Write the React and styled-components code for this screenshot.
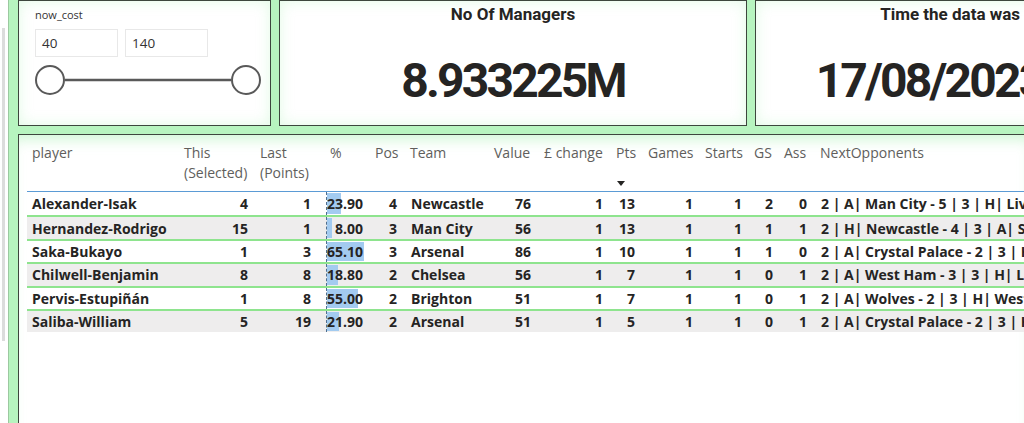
import React from 'react';
import styled, { createGlobalStyle } from 'styled-components';

const GlobalStyle = createGlobalStyle`
	html, body {
		margin: 0;
		padding: 0;
		background: #ffffff;
		overflow: hidden;
	}

	#root {
		width: 1024px;
		height: 423px;
	}
`

const green = '#b7f4bf';
const edge = '#3d463d';
const columns = '153px 76px 70px 45px 35px 84px 50px 72px 32px 57px 49px 30px 36px 420px';

const Page = styled.div`
	display: flex;
	width: 1024px;
	height: 423px;
	overflow: hidden;
`

const LeftRail = styled.div`
	width: 8px;
	flex-shrink: 0;
	padding-top: 28px;
	box-sizing: border-box;

	&::before {
		content: "";
		display: block;
		margin-left: 2px;
		width: 3px;
		height: 313px;
		background: #dcdcdc;
	}
`

const Canvas = styled.div`
	flex: 1;
	min-width: 0;
	background: ${green};
	border-left: 1px solid #9cc9a0;
	padding-left: 9px;
	display: flex;
	flex-direction: column;
`

const TopRow = styled.div`
	display: flex;
	gap: 8px;
	height: 126px;
	flex-shrink: 0;
`

const Card = styled.div`
	flex-shrink: 0;
	width: ${props => props.width}px;
	box-sizing: border-box;
	height: 126px;
	background: #ffffff;
	border: 1px solid ${edge};
	box-shadow: inset 0 0 14px rgba(170, 240, 180, 0.35);
	display: flex;
	flex-direction: column;
	overflow: hidden;
`

const SlicerCard = styled(Card)`
	padding: 6px 0 0 16px;
	font-family: "Open Sans", "Noto Sans", sans-serif;
	color: #333333;
`

const SlicerLabel = styled.div`
	font-size: 11px;
	line-height: 15px;
`

const RangeInputs = styled.div`
	display: flex;
	gap: 7px;
	margin-top: 7px;
`

const RangeBox = styled.div`
	width: 83px;
	height: 28px;
	box-sizing: border-box;
	border: 1px solid #e8e8e8;
	padding-left: 6px;
	display: flex;
	align-items: center;
	font-size: 13.5px;
`

const SliderTrack = styled.svg`
	display: block;
	margin-top: 7px;
	margin-left: -1px;
`

const KpiTitle = styled.div`
	font-family: Roboto, "DejaVu Sans", sans-serif;
	font-weight: 700;
	font-size: 17px;
	line-height: 22px;
	text-align: center;
	color: #252423;
	margin-top: 2px;
	white-space: nowrap;
`

const KpiValue = styled.div`
	flex: 1;
	display: flex;
	align-items: center;
	justify-content: center;
	padding-top: 10px;
	font-family: Roboto, "DejaVu Sans", sans-serif;
	font-weight: 700;
	font-size: 48px;
	letter-spacing: -2.8px;
	color: #252423;
	white-space: nowrap;
`

const TableCard = styled.div`
	flex: 1;
	margin-top: 8px;
	background: #ffffff;
	border-top: 1px solid ${edge};
	border-left: 1px solid ${edge};
	box-shadow: inset 0 12px 14px -8px rgba(170, 240, 180, 0.6);
	padding: 0 0 0 8px;
	font-family: "Open Sans", "Noto Sans", sans-serif;
	font-size: 14px;
	overflow: hidden;
`

const HeaderRow = styled.div`
	display: grid;
	grid-template-columns: ${columns};
	height: 57px;
	border-bottom: 1px solid #5b9bd5;
	box-sizing: border-box;
	color: #605e5c;
`

const HeaderCell = styled.div`
	position: relative;
	padding: 8px 0 0 ${props => props.first ? 5 : 4}px;
	line-height: 20px;
	white-space: nowrap;
`

const SortArrow = styled.span`
	position: absolute;
	left: 5px;
	top: 46px;
	width: 0;
	height: 0;
	border-left: 4px solid transparent;
	border-right: 4px solid transparent;
	border-top: 5px solid #252423;
`

const Row = styled.div`
	display: grid;
	grid-template-columns: ${columns};
	height: 23.4px;
	box-sizing: border-box;
	background: ${props => props.shaded ? '#eeeded' : '#ffffff'};
	border-top: ${props => props.first ? 'none' : '2px solid #8ee48e'};
	color: #252423;
	font-weight: 700;
`

const Cell = styled.div`
	display: flex;
	align-items: center;
	justify-content: ${props => props.num ? 'flex-end' : 'flex-start'};
	padding-left: ${props => props.num ? 0 : 5}px;
	padding-right: ${props => props.pr || 0}px;
	white-space: nowrap;
	overflow: hidden;
`

const PctCell = styled(Cell)`
	position: relative;
	border-left: 1px dashed #4f6f8f;
	overflow: visible;
`

const PctBar = styled.span`
	position: absolute;
	left: 0;
	top: 1px;
	bottom: 1px;
	background: #a3cbf0;
`

const PctText = styled.span`
	position: relative;
`

const headers = [
	['player'],
	['This', '(Selected)'],
	['Last', '(Points)'],
	['%'],
	['Pos'],
	['Team'],
	['Value'],
	['£ change'],
	['Pts'],
	['Games'],
	['Starts'],
	['GS'],
	['Ass'],
	['NextOpponents'],
];

const players = [
	{ name: 'Alexander-Isak', sel: 4, pts: 1, pct: 23.9, pos: 4, team: 'Newcastle', value: 76, change: 1, total: 13, games: 1, starts: 1, gs: 2, ass: 0, next: '2 | A| Man City - 5 | 3 | H| Liverpool - 5 | 4 | A| Brighton - 3' },
	{ name: 'Hernandez-Rodrigo', sel: 15, pts: 1, pct: 8.0, pos: 3, team: 'Man City', value: 56, change: 1, total: 13, games: 1, starts: 1, gs: 1, ass: 1, next: '2 | H| Newcastle - 4 | 3 | A| Sheffield Utd - 2 | 4 | H| Fulham - 2' },
	{ name: 'Saka-Bukayo', sel: 1, pts: 3, pct: 65.1, pos: 3, team: 'Arsenal', value: 86, change: 1, total: 10, games: 1, starts: 1, gs: 1, ass: 0, next: '2 | A| Crystal Palace - 2 | 3 | H| Fulham - 2 | 4 | H| Man Utd - 3' },
	{ name: 'Chilwell-Benjamin', sel: 8, pts: 8, pct: 18.8, pos: 2, team: 'Chelsea', value: 56, change: 1, total: 7, games: 1, starts: 1, gs: 0, ass: 1, next: '2 | A| West Ham - 3 | 3 | H| Luton - 2 | 4 | A| Nott\'m Forest - 2' },
	{ name: 'Pervis-Estupiñán', sel: 1, pts: 8, pct: 55.0, pos: 2, team: 'Brighton', value: 51, change: 1, total: 7, games: 1, starts: 1, gs: 0, ass: 1, next: '2 | A| Wolves - 2 | 3 | H| West Ham - 3 | 4 | A| Newcastle - 3' },
	{ name: 'Saliba-William', sel: 5, pts: 19, pct: 21.9, pos: 2, team: 'Arsenal', value: 51, change: 1, total: 5, games: 1, starts: 1, gs: 0, ass: 1, next: '2 | A| Crystal Palace - 2 | 3 | H| Fulham - 2 | 4 | H| Man Utd - 3' },
];

const Slider = () => (
	<SliderTrack width="230" height="32" viewBox="0 0 230 32">
		<line x1="31" y1="16" x2="197" y2="16" stroke="#595959" strokeWidth="2.5"/>
		<circle cx="16" cy="16" r="14" fill="#ffffff" stroke="#595959" strokeWidth="2"/>
		<circle cx="212" cy="16" r="14" fill="#ffffff" stroke="#595959" strokeWidth="2"/>
	</SliderTrack>
);

const App = () => {
	return (
		<Page>
			<GlobalStyle/>
			<LeftRail/>
			<Canvas>
				<TopRow>
					<SlicerCard width={253}>
						<SlicerLabel>now_cost</SlicerLabel>
						<RangeInputs>
							<RangeBox>40</RangeBox>
							<RangeBox>140</RangeBox>
						</RangeInputs>
						<Slider/>
					</SlicerCard>
					<Card width={468}>
						<KpiTitle>No Of Managers</KpiTitle>
						<KpiValue>8.933225M</KpiValue>
					</Card>
					<Card width={468}>
						<KpiTitle>Time the data was refreshed</KpiTitle>
						<KpiValue>17/08/2023 10:30</KpiValue>
					</Card>
				</TopRow>
				<TableCard>
					<HeaderRow>
						{headers.map((lines, i) => (
							<HeaderCell key={i} first={i === 0}>
								{lines.map(l => <div key={l}>{l}</div>)}
								{lines[0] === 'Pts' && <SortArrow/>}
							</HeaderCell>
						))}
					</HeaderRow>
					{players.map((p, i) => (
						<Row key={p.name} first={i === 0} shaded={i % 2 === 1}>
							<Cell>{p.name}</Cell>
							<Cell num pr={8}>{p.sel}</Cell>
							<Cell num pr={15}>{p.pts}</Cell>
							<PctCell num pr={8}>
								<PctBar style={{ width: `${p.pct * 0.565}px` }}/>
								<PctText>{p.pct.toFixed(2)}</PctText>
							</PctCell>
							<Cell num pr={9}>{p.pos}</Cell>
							<Cell>{p.team}</Cell>
							<Cell num pr={9}>{p.value}</Cell>
							<Cell num pr={9}>{p.change}</Cell>
							<Cell num pr={9}>{p.total}</Cell>
							<Cell num pr={8}>{p.games}</Cell>
							<Cell num pr={8}>{p.starts}</Cell>
							<Cell num pr={7}>{p.gs}</Cell>
							<Cell num pr={9}>{p.ass}</Cell>
							<Cell>{p.next}</Cell>
						</Row>
					))}
				</TableCard>
			</Canvas>
		</Page>
	);
};

export default App;
